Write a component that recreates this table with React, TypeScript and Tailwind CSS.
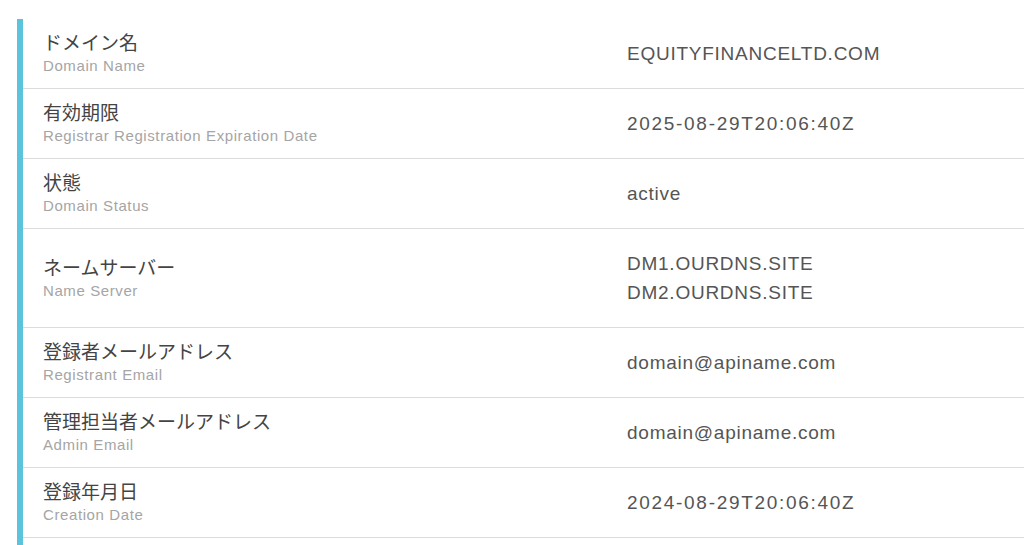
import React from "react";

const rows: { ja: string; en: string; values: string[]; date?: boolean }[] = [
  { ja: "ドメイン名", en: "Domain Name", values: ["EQUITYFINANCELTD.COM"] },
  { ja: "有効期限", en: "Registrar Registration Expiration Date", values: ["2025-08-29T20:06:40Z"], date: true },
  { ja: "状態", en: "Domain Status", values: ["active"] },
  { ja: "ネームサーバー", en: "Name Server", values: ["DM1.OURDNS.SITE", "DM2.OURDNS.SITE"] },
  { ja: "登録者メールアドレス", en: "Registrant Email", values: ["domain@apiname.com"] },
  { ja: "管理担当者メールアドレス", en: "Admin Email", values: ["domain@apiname.com"] },
  { ja: "登録年月日", en: "Creation Date", values: ["2024-08-29T20:06:40Z"], date: true },
];

export default function App() {
  return (
    <div
      className="w-[1024px] h-[545px] overflow-hidden bg-white pt-[19px] pl-[17px]"
      style={{ fontFamily: '"Liberation Sans", "Noto Sans CJK JP", sans-serif' }}
    >
      <div className="border-l-[6px] border-[#5bc4dc] h-[600px]">
        {rows.map((r) => (
          <div key={r.ja} className="grid grid-cols-[584px_1fr] border-b border-[#dcdcdc]">
            <div className="flex flex-col justify-center pl-5">
              <div className="text-[19px] leading-[24px] text-[#444]">{r.ja}</div>
              <div className="text-[15px] leading-[19px] tracking-[0.6px] text-[#a5a5a5]">{r.en}</div>
            </div>
            <div className="py-5 pl-5 flex flex-col justify-center">
              {r.values.map((v) => (
                <div
                  key={v}
                  className={
                    r.date
                      ? "text-[19px] leading-[29px] tracking-[1.7px] text-[#555]"
                      : "text-[19px] leading-[29px] tracking-[0.75px] text-[#555]"
                  }
                >
                  {v}
                </div>
              ))}
            </div>
          </div>
        ))}
      </div>
    </div>
  );
}
